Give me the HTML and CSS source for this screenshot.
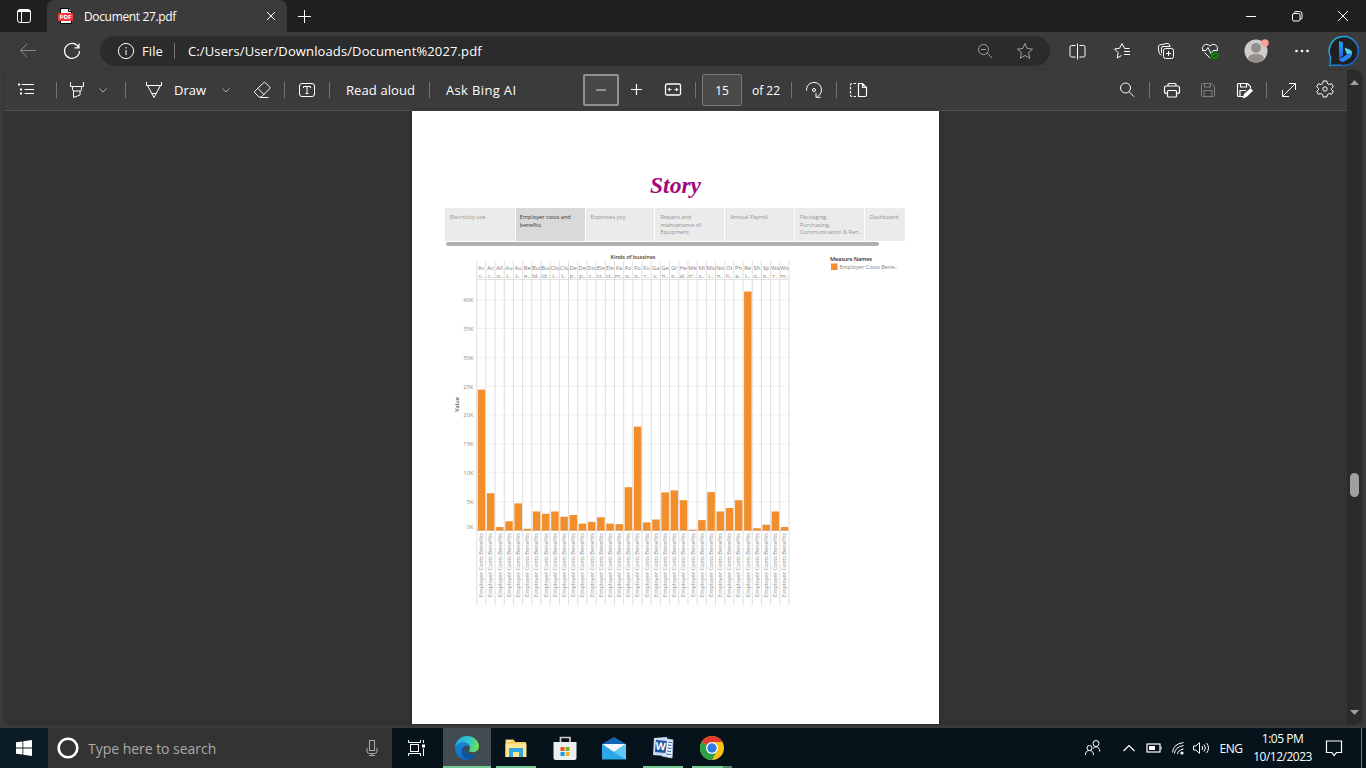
FILE: index.html
```html
<!DOCTYPE html>
<html lang="en">
<head>
<meta charset="utf-8">
<title>Document 27.pdf</title>
<link rel="stylesheet" href="styles.css">
</head>
<body>
<div class="screen">
  <header class="titlebar">
    <div class="workspace"><svg class="ic" width="16" height="16"><rect x="1.5" y="1.5" width="13" height="13" rx="2.5"/><path d="M1.5 3.5h13M2 2.5h12M5.500 4v10"/></svg></div>
    <div class="tab">
      <svg width="16" height="16"><path d="M2.500.5h8l3 3v12h-11z" fill="#fff" stroke="#000"/><path d="M10.500.5v3h3" fill="#ddd" stroke="#000"/><rect y="5" width="15" height="8" rx="1" fill="#f33b3b"/><text x="1.500" y="11.200" font-size="6" font-weight="700" textLength="12" lengthAdjust="spacingAndGlyphs" fill="#fff">PDF</text></svg>
      <span class="tab-title">Document 27.pdf</span>
      <svg class="ic tab-close" width="10" height="10"><path d="M1 1l8 8M9 1l-8 8"/></svg>
    </div>
    <div class="newtab"><svg class="ic" width="15" height="15"><path d="M7.500 1v13M1 7.500h13"/></svg></div>
    <div class="window-buttons">
      <svg class="ic" width="12" height="12"><path d="M1 6.500h10"/></svg>
      <svg class="ic" width="12" height="12"><rect x="1.500" y="3.500" width="7.500" height="7.500" rx="1.500"/><path d="M3.500 3.500V2.500q0-1 1-1h4q2.500 0 2.500 2.500v4q0 1-1 1H9"/></svg>
      <svg class="ic" width="12" height="12"><path d="M1 1l10 10M11 1L1 11"/></svg>
    </div>
  </header>

  <nav class="addressbar">
    <div class="cell dim"><svg class="ic" width="18" height="16"><path d="M17 7.500H1.500M8 1L1.500 7.500L8 14"/></svg></div>
    <div class="cell"><svg class="ic w12" width="18" height="18"><path d="M15.700 5.500A7.500 7.500 0 1 0 16.500 9M16 1.500v4.300h-4.500"/></svg></div>
    <div class="omnibox">
      <div class="cell"><svg class="ic" width="18" height="18"><circle cx="9" cy="9" r="7.600"/><path d="M9 8v5M9 5v1.500"/></svg></div>
      <span class="file">File</span>
      <i class="sep"></i>
      <span class="url">C:/Users/User/Downloads/Document%2027.pdf</span>
      <div class="cell mid"><svg class="ic" width="16" height="16"><circle cx="6.500" cy="6.500" r="5"/><path d="M4 6.500h5M10.200 10.200L15 15"/></svg></div>
      <div class="cell mid"><svg class="ic" width="18" height="18"><path d="M9 1.500l2.200 5 5.300.6-4 3.600 1.200 5.500L9 13.500l-4.700 2.700 1.200-5.500-4-3.600 5.300-.6z"/></svg></div>
    </div>
    <div class="cell"><svg class="ic" width="17" height="17"><path d="M6.500 2.500h-4q-1.500 0-1.500 1.500v8.500q0 1.500 1.500 1.500h4M10.500 2.500h4q1.500 0 1.500 1.500v8.500q0 1.500-1.500 1.500h-4M8.500 .5v16"/></svg></div>
    <div class="cell"><svg class="ic" width="18" height="18"><path d="M16.500 6.500h-4.800L9 1.500 6.500 6.300 1.500 7l3.700 3.700-1 5.300L8.500 13.500M11 9.500h6M11 12.500h6"/></svg></div>
    <div class="cell"><svg class="ic" width="18" height="18"><rect x="6.500" y="6.500" width="10" height="10" rx="2"/><path d="M11.500 9v5M9 11.500h5M4.500 13Q2.500 12.500 2 10.500L1.300 5Q1.200 3.300 3 2.800l7-1.300q2-.2 2.500 1.500l.3 1.500M4.500 11V6q0-1.500 1.500-1.500h7.500"/></svg></div>
    <div class="cell"><svg class="ic" width="18" height="18"><path d="M2.300 9C-.5 4 5 0 9 4c4-4 9.500 0 6.700 5M1 8.500h4l2-3 3 6 2-3h4.500M3.500 10.500L9 16"/><circle cx="13.500" cy="13.500" r="4" fill="#107c10" stroke="none"/><path d="M11.800 13.800l1.200 1 2-2.200" stroke="#043904"/></svg></div>
    <div class="cell"><svg width="26" height="26"><circle cx="13" cy="13" r="11.500" fill="#cfccc9"/><circle cx="13" cy="10" r="5" fill="#918e8b"/><path d="M5 21q0-5 8-5t8 5q-8 7-16 0z" fill="#918e8b"/><circle cx="22" cy="5" r="3.700" fill="#ff9e98"/></svg></div>
    <div class="cell"><svg width="16" height="16"><g fill="#fff"><circle cx="2.500" cy="8" r="1.300"/><circle cx="8" cy="8" r="1.300"/><circle cx="13.500" cy="8" r="1.300"/></g></svg></div>
    <div class="cell"><svg width="32" height="32">
      <defs><linearGradient id="ring" x1="0" y1="0" x2="1" y2="1"><stop offset="0" stop-color="#26c3e8"/><stop offset="1" stop-color="#174fcc"/></linearGradient><linearGradient id="bee" x1="0" y1="0" x2="0" y2="1"><stop offset="0" stop-color="#27a4f5"/><stop offset="1" stop-color="#1c5ee8"/></linearGradient></defs>
      <path d="M16 1.500a14.500 14.500 0 1 1-4 28.500L1.700 30.500l1-8A14.500 14.500 0 0 1 16 1.500z" fill="#202020" stroke="url(#ring)" stroke-width="1.500"/>
      <path d="M11 6l4 1.500V20l-4 4.500z" fill="url(#bee)"/><path d="M16.500 12.500l6 2.500q2.500 2 1 5.500l-5-2z" fill="#4ad5e8"/><path d="M11 24.500l8-5q3-2 5-1-.5 3.500-3 5l-6 3.500q-3-.5-4-2.500z" fill="#2987f4"/></svg></div>
  </nav>

  <main class="frame">
    <section class="viewer">
      <div class="pdfbar">
        <svg class="ic ml10" width="24" height="24"><path d="M7.500 6.500H20M10.500 11.500H20M10.500 15.500H20"/><path d="M4 6.500h2M6 11.500h2M6 15.500h2" stroke-width="2"/></svg>
        <i class="sep ml18"></i>
        <svg class="ic ml8" width="24" height="24"><path d="M5.500 4v4.500h13V4M7.500 8.500v3q0 1.500 1.500 1.500h6q1.500 0 1.500-1.500v-3M8.500 13v6.500l6.500-2.500v-4"/></svg>
        <svg class="ic ml8" width="12" height="12"><path d="M2.500 4.500L6 8l3.500-3.500" stroke="#aaa"/></svg>
        <i class="sep ml16"></i>
        <svg class="ic ml16" width="24" height="24"><path d="M4.500 4v3.500h15V4M5.500 7.500l6.500 12 6.500-12M9.500 15.500h5" /></svg>
        <span class="label draw ml8">Draw</span>
        <svg class="ic ml10" width="12" height="12"><path d="M2.500 4.500L6 8l3.500-3.500" stroke="#aaa"/></svg>
        <svg class="ic ml18" width="24" height="24"><path d="M4.800 13.200L13.500 4.800q1-1 2 0l4 4q1 1 0 2l-8 8q-1 1-2.500 0l-4.200-4q-1-.8 0-1.600zM8 10.500l6 6M10 19.500h8.500"/></svg>
        <i class="sep ml10"></i>
        <svg class="ic ml10" width="24" height="24"><rect x="4.500" y="5.500" width="15" height="13" rx="2.500"/><path d="M8.500 10V8.500h7V10M12 8.500v7M10.500 15.500h3"/></svg>
        <i class="sep ml10"></i>
        <span class="label read ml16">Read aloud</span>
        <i class="sep ml11"></i>
        <span class="label bing ml16">Ask Bing AI</span>
        <button class="minus ml63"><svg class="ic" width="12" height="12"><path d="M1 6h10" stroke="#aaa" stroke-width="1.500"/></svg></button>
        <svg class="ic ml5 w12" width="24" height="24"><path d="M7 11.500h11M12.500 6v11"/></svg>
        <svg class="ic ml13" width="24" height="24"><rect x="4.500" y="6" width="15" height="11" rx="1.500" stroke-width="1.300"/><path d="M7.500 11.500h3M13.500 11.500h3"/><path d="M6.500 11.500l2.500-2v4zM17.500 11.500L15 9.500v4z" fill="#fff" stroke="none"/></svg>
        <i class="sep ml10"></i>
        <span class="pagebox ml6">15</span>
        <span class="label total ml10">of 22</span>
        <i class="sep ml9"></i>
        <svg class="ic ml10" width="24" height="24"><path d="M4.500 12.500A7.500 7.500 0 1 1 15.500 18.500M14 14.800v4.500h4.500"/><circle cx="12" cy="12" r="1.500"/></svg>
        <i class="sep ml10"></i>
        <svg class="ic ml9 w12" width="24" height="24"><path d="M12.500 5.500h4l4 4v7.500q0 1.500-1.500 1.500h-6.500zM16.500 5.500v4h4"/><path d="M10 5.500H6q-1.500 0-1.500 1.500v10q0 1.500 1.500 1.500h4" stroke-dasharray="2.500 1.500"/></svg>
        <svg class="ic push" width="24" height="24"><circle cx="10.500" cy="10" r="5"/><path d="M14 13.700L19 18.700"/></svg>
        <i class="sep ml10"></i>
        <svg class="ic ml10 w12" width="24" height="24"><path d="M8 8V6.500q0-1 1-1h6q1 0 1 1V8M7.500 15.500h-1q-2 0-2-2V10q0-2 2-2h11q2 0 2 2v3.500q0 2-2 2h-1"/><rect x="7.500" y="12.500" width="9" height="6.500" rx="1"/></svg>
        <svg class="ic ml12 faint" width="24" height="24"><path d="M6.500 5.500h9l3 3v9q0 1-1 1h-11q-1 0-1-1v-11q0-1 1-1zM8.500 5.500v3.500h6V5.500M8 18.500v-6h8v6"/></svg>
        <svg class="ic ml12 w12" width="24" height="24"><path d="M11 18.500H6.500q-1 0-1-1v-11q0-1 1-1h9l3 3v2M8.500 5.500v3.500h6V5.500M8 18.500v-6h6"/><path d="M11.500 19.500l1-3.200 6-5.300 1.700 1.800-6 5.700z" fill="#fff"/></svg>
        <i class="sep ml10"></i>
        <svg class="ic ml10" width="24" height="24"><path d="M5.500 18.500L18.500 5.500M12 5.500h6.500V12M5.500 12v6.500H12"/></svg>
        <svg class="ic ml12" width="24" height="24"><path d="M10.200 3h3.600l.6 2.500 1.700 1 2.500-.8 1.700 3-1.900 1.800v1l1.900 1.800-1.700 3-2.500-.8-1.700 1-.6 2.500h-3.600l-.6-2.500-1.700-1-2.500.8-1.700-3 1.900-1.800v-1L3.700 8.700l1.700-3 2.500.8 1.700-1z"/><circle cx="12" cy="11" r="2.200"/></svg>
      </div>
      <div class="canvas">
        <article class="page">
          <h1>Story</h1>
          <div class="story-points">
            <div>Elecrticity use</div>
            <div class="active">Employer costs and<br>benefits</div>
            <div>Expenses yoy</div>
            <div>Repairs and<br>maintanance of<br>Equipment</div>
            <div>Annual Payroll</div>
            <div>Packaging,<br>Purchasing,<br>Communication &amp; Ren..</div>
            <div>Dashboard</div>
          </div>
          <div class="story-scroll"></div>
          <svg id="chart" class="chart" width="527" height="360" viewBox="412 250 527 360"></svg>
        </article>
      </div>
    </section>
    <aside class="scrollbar">
      <svg width="9" height="5"><path d="M0 5L4.500 0 9 5z" fill="#a0a0a0"/></svg>
      <div class="thumb"></div>
      <svg width="9" height="5"><path d="M0 0L4.500 5 9 0z" fill="#a0a0a0"/></svg>
    </aside>
  </main>

  <footer class="taskbar">
    <div class="start"><svg width="16" height="16" fill="#fff"><path d="M0 2.300L6.500 1.400V7.600H0zM7.300 1.200L16 0v7.600H7.300zM0 8.400h6.500v6.200L0 13.700zM7.300 8.400H16V16l-8.700-1.200z"/></svg></div>
    <div class="search">
      <svg width="22" height="22"><circle cx="11" cy="11" r="9.300" fill="none" stroke="#fff" stroke-width="2.600"/></svg>
      <span>Type here to search</span>
      <svg width="12" height="18" fill="none" stroke="#aaa"><rect x="3.500" y="1.500" width="5" height="10"/><path d="M1 9v3q0 2.500 2.500 2.500h5Q11 14.500 11 12V9M6 14.500v2M3 16.500h6"/></svg>
    </div>
    <div class="app view"><svg class="ic" width="18" height="18"><rect x="3.500" y="5.500" width="8" height="7"/><path d="M1.500 1v2.500h12V1M1.500 17v-2.500h12V17M16.500 1v3M16.500 9.500V17"/><path d="M15 5.500h3v3h-3z" fill="#fff" stroke="none"/></svg></div>
    <div class="app on current"><svg width="24" height="24" viewBox="0 0 24 24">
      <defs>
        <linearGradient id="sea" x1="0" y1=".3" x2="1" y2=".5"><stop offset="0" stop-color="#2aa5e2"/><stop offset=".55" stop-color="#2fc6cf"/><stop offset="1" stop-color="#6fe04f"/></linearGradient>
        <linearGradient id="deep" x1="0" y1="0" x2="0" y2="1"><stop offset="0" stop-color="#1687d8"/><stop offset="1" stop-color="#1068bd"/></linearGradient>
      </defs>
      <path d="M0 11.500C.5 4.500 6 0 12 0c7 0 12 5 12 10.300 0 3.700-2.800 5.900-6 5.900-2.600 0-4-.8-4-1.700 0-.6 1-1 1-2.600C15 9 12 6.500 8.500 6.500 4 6.500.5 9.500 0 11.500z" fill="url(#sea)"/>
      <path d="M0 11.500C1 8 4.500 6.500 8 6.500c4 0 7 2.500 7 5.400C14.500 10.500 13 9.600 11.500 9.600 9 9.600 7 12 7 15c0 5 4.500 8 7 8.700-1 .3-1.500.3-2 .3C5 24 0 18.500 0 12z" fill="url(#deep)"/>
      <path d="M11.500 9.600C8.500 10.800 7 13 7 15.500c0 5 4 8.200 7 8.200 3.500-.5 6.500-2.700 8-5.200.3-.6-.1-.8-.6-.6C14.500 20.800 9 16.500 9.500 12.500c.2-1.300 1-2.400 2-2.900z" fill="#0e559f"/>
    </svg></div>
    <div class="app on"><svg width="24" height="24"><path d="M1.500 3.500h8l2 2.500H22v15H1.500z" fill="#f5cb57"/><path d="M1.500 7.500H22.500V21h-21z" fill="#ffe594"/><path d="M2.500 4.500h5v1h-5z" fill="#fff"/><path d="M5 21v-8q0-1 1-1h12q1 0 1 1v8h-4v-5H9v5z" fill="#35a7e0"/></svg></div>
    <div class="app"><svg width="24" height="26"><path d="M7.500 8V2.500h9.500V8" fill="none" stroke="#ccc" stroke-width="1.700"/><path d="M.5 7h23v16q0 2-2 2h-19q-2 0-2-2z" fill="#eee"/><path d="M7.500 12H11.500v4h-4z" fill="#ef5122"/><path d="M12.500 12h4v4h-4z" fill="#78b51e"/><path d="M7.500 17h4v4h-4z" fill="#10a1e6"/><path d="M12.500 17h4v4h-4z" fill="#f6b71d"/></svg></div>
    <div class="app"><svg width="26" height="26"><path d="M1 9L13 2l12 7v15H1z" fill="#1364b4"/><path d="M1 9h24L13 18z" fill="#f4f6f8"/><path d="M1 9l12 8 12-8v15.500H1z" fill="#2ca8e8"/><path d="M25 9v15.500L13 17z" fill="#5ccbf3"/></svg></div>
    <div class="app on"><svg width="26" height="26"><path d="M12 3l11 2-1 18-10-2z" fill="#eef3fb" stroke="#a5bddf"/><path d="M18 7l4 .6M18 10l3.500.5M17.500 13l4 .5M17 16l4 .5M16 19l5 .6" stroke="#315da5"/><path d="M4 3l13-1-2 19-12-1z" fill="#c9daf2"/><path d="M6 5l11 1-1.500 12L5 17z" fill="#24549e"/><text x="5.500" y="15" font-size="10.500" font-weight="700" fill="#fff" transform="rotate(5 12 12)">W</text></svg></div>
    <div class="app on chrome"><svg width="26" height="26"><circle cx="13" cy="13" r="12" fill="#fbc116"/><path d="M13 13L2.600 7A12 12 0 0 1 23.400 7z" fill="#e33b2e"/><path d="M13 13L2.600 7A12 12 0 0 0 13 25l5-9z" fill="#2da14c"/><path d="M13 7h10.400L18 16z" fill="#fbc116"/><circle cx="13" cy="13" r="6" fill="#fff"/><circle cx="13" cy="13" r="4.700" fill="#3478e5"/></svg></div>
    <div class="tray">
      <svg class="ic" width="18" height="18"><circle cx="12" cy="4.500" r="3"/><circle cx="5.500" cy="9" r="2.500"/><path d="M1.500 16q0-4.500 4-4.500t4 4.500M9 9.500Q12 6 15 9.500q.7 1 .7 3"/></svg>
      <svg class="ic w12" width="14" height="14"><path d="M1.500 10L7 4.500l5.500 5.500"/></svg>
      <svg class="ic" width="16" height="12"><rect x="1" y="2" width="13" height="8" stroke-width="1.200"/><path d="M15 4.500v3"/><path d="M3 4h6v4H3z" fill="#fff" stroke="none"/></svg>
      <svg class="ic" width="14" height="14" ><path d="M3.500 12.500Q4 6 12.500 4.500M6.500 13Q7 9 12.500 8M1.500 11.500Q2 3 12.500 1.500" /><circle cx="11" cy="12" r="1.600" fill="#fff" stroke="none"/></svg>
      <svg class="ic" width="18" height="14"><path d="M1.500 5H4l3.500-3.500v11L4 9H1.500zM10 5q1.500 2 0 4M12 3.500q3 3.500 0 7M14.500 2q4 5 0 10"/></svg>
      <span class="lang">ENG</span>
      <div class="clock"><span>1:05 PM</span><span>10/12/2023</span></div>
      <svg class="ic w12" width="18" height="18"><path d="M1.500 2h15v11.500h-5L9 16.500 7 13.500H1.500z"/></svg>
      <i class="desktop-edge"></i>
    </div>
  </footer>
</div>
<script src="chart.js"></script>
</body>
</html>
```
FILE: styles.css
```css
* { box-sizing: border-box; }
body { margin: 0; font-family: "Open Sans", "Noto Sans", sans-serif; color: #fff; background: #3b3b3b; overflow: hidden; }
.screen { width: 1366px; height: 768px; display: flex; flex-direction: column; background: #3b3b3b; }
svg { display: block; flex: none; }
.ic { fill: none; stroke: #fff; stroke-width: 1; }
.w12 { stroke-width: 1.2; }
.cell { display: flex; align-items: center; justify-content: center; }
.sep { flex: none; width: 1px; height: 16px; background: #737373; }

.titlebar { height: 32px; flex: none; display: grid; grid-template-columns: 47px 240px 35px 1fr 138px; background: #202020; }
.workspace, .newtab { display: flex; align-items: center; justify-content: center; }
.tab { display: flex; align-items: center; padding: 0 11px 0 11px; background: #3b3b3b; border-radius: 8px 8px 0 0; }
.tab-title { margin-left: 10px; flex: 1; font-size: 12px; letter-spacing: -0.35px; white-space: nowrap; }
.window-buttons { grid-column: 5; display: grid; grid-template-columns: repeat(3, 46px); place-items: center; }

.addressbar { height: 38px; flex: none; display: grid; grid-template-columns: 56px 32px 12px 950px 5px 44px 45px 44px 44px 48px 44px 40px; align-items: center; }
.addressbar > :nth-child(3) { grid-column: 4; }
.addressbar > :nth-child(4) { grid-column: 6; }
.omnibox { height: 30px; border-radius: 15px; background: #2b2b2b; display: grid; grid-template-columns: 16px 20px 6px 26px 13px 7px 1fr 40px 40px 5px; align-items: center; font-size: 13px; white-space: nowrap; }
.omnibox > :nth-child(1) { grid-column: 2; }
.omnibox .file { grid-column: 4; letter-spacing: 0.1px; }
.omnibox .sep { justify-self: center; }
.omnibox .url { grid-column: 7; letter-spacing: 0.12px; }
.dim { opacity: .4; }
.mid { opacity: .55; }
.faint { opacity: .35; }

.frame { height: 655px; margin: 0 4px 3px; flex: none; display: flex; border-radius: 8px; overflow: hidden; background: #333; box-shadow: 0 0 2px #2b2b2b; }
.viewer { flex: 1; display: flex; flex-direction: column; }
.pdfbar { height: 41px; flex: none; display: flex; align-items: center; padding-right: 10px; background: #3b3b3b; border-bottom: 1px solid #505050; }
.label { font-size: 13px; white-space: nowrap; }
.draw { width: 36px; }
.read { width: 72px; letter-spacing: 0.1px; }
.bing { width: 74px; letter-spacing: 0.35px; }
.total { width: 30px; font-size: 12px; }
.minus { width: 36px; height: 32px; padding: 0; display: flex; align-items: center; justify-content: center; background: #484848; border: 2px solid #909090; border-radius: 2px; }
.pagebox { width: 40px; height: 32px; display: flex; align-items: center; justify-content: center; background: #4a4a4a; border: 1px solid #777; border-radius: 2px; font-size: 12px; }
.ml5 { margin-left: 5px; }
.ml6 { margin-left: 6px; }
.ml8 { margin-left: 8px; }
.ml9 { margin-left: 9px; }
.ml10 { margin-left: 10px; }
.ml11 { margin-left: 11px; }
.ml12 { margin-left: 12px; }
.ml13 { margin-left: 13px; }
.ml16 { margin-left: 16px; }
.ml18 { margin-left: 18px; }
.ml63 { margin-left: 63px; }
.push { margin-left: auto; }

.canvas { flex: 1; padding: 0 0 1px 408px; background: #333; }
.page { width: 527px; height: 613px; background: #fff; box-shadow: 0 0 3px #222; }
.page h1 { margin: 0; padding-top: 60px; height: 97px; text-align: center; font: italic 700 23.5px/28px "Liberation Serif", serif; color: #a0087c; }
.story-points { margin-left: 33px; width: 460px; height: 33px; display: grid; grid-template-columns: 69.8px repeat(5, 68.8px) 1fr; column-gap: 1px; }
.story-points div { padding: 6px 0 0 5px; background: #ebebeb; color: #929292; font-size: 5.6px; line-height: 7.6px; white-space: nowrap; }
.story-points .active { padding-left: 4px; background: #d9d9d9; color: #333; }
.story-scroll { width: 433px; height: 4px; margin: 1px 0 4px 34px; border-radius: 2px; background: #b0b0b0; }
.chart text { font-family: "Open Sans", sans-serif; }

.scrollbar { width: 15px; display: flex; flex-direction: column; align-items: center; padding: 10px 0; background: #2b2b2b; }
.thumb { width: 9px; height: 24px; margin: 388px 0 auto; border-radius: 5px; background: #a0a0a0; }

.taskbar { height: 40px; flex: none; display: flex; background: #07131a; }
.start { width: 48px; display: flex; align-items: center; justify-content: center; background: #0a1b23; }
.search { width: 344px; display: flex; align-items: center; padding: 0 14px 0 9px; background: #333; color: #aaa; font-size: 14px; }
.search span { flex: 1; margin-left: 9px; letter-spacing: -0.03px; }
.app { width: 48px; margin-right: 1px; display: flex; align-items: center; justify-content: center; }
.view { margin-right: 3px; }
.app.on { background: linear-gradient(#76c893, #76c893) 50% 100% / 40px 2px no-repeat; }
.app.current { background: linear-gradient(#76c893, #76c893) 50% 100% / 48px 2px no-repeat, #414b50; }
.app.chrome { background: linear-gradient(90deg, #76c893 31px, #4c8767 31px) 50% 100% / 40px 2px no-repeat; }
.tray { margin-left: auto; display: grid; grid-template-columns: 36px 36px 14px 34px 12px 48px 55px 47px 9px; align-items: center; justify-items: center; }
.lang { font-size: 12px; letter-spacing: -0.4px; }
.clock { display: flex; flex-direction: column; align-items: center; font-size: 12px; line-height: 18px; letter-spacing: -0.5px; white-space: nowrap; }
.desktop-edge { width: 1px; height: 40px; background: #777; }
```
FILE: chart.js
```js
const NS = 'http://www.w3.org/2000/svg';
const chart = document.getElementById('chart');
const left = 476.7, right = 789, base = 530.5, unit = 5.772;

// [first label line, second label line, value in thousands]
const rows = [
  ['Ac','c..',24.4],['Ac','c..',6.45],['All','o..',.6],['Au','t..',1.6],['Au','t..',4.7],['Be','e..',.3],
  ['Bui','ld..',3.3],['Bui','ld..',2.9],['Clo','t..',3.3],['Clo','t..',2.4],['De','p..',2.7],['De','p..',1.2],
  ['Dis','c..',1.5],['Ele','ct..',2.3],['Ele','ct..',1.2],['Fa','m..',1.1],['Fo','o..',7.5],['Fo','o..',18],
  ['Fu','r..',1.4],['Ga','s..',1.9],['Ge','n..',6.6],['Gr','o..',6.95],['He','al..',5.25],['Me',"n'..",.15],
  ['Mi','s..',1.8],['Mo','t..',6.65],['No','n..',3.3],['Ot','h..',3.9],['Ph','a..',5.25],['Re','t..',41.4],
  ['Sh','o..',.4],['Sp','o..',1],['Wa','r..',3.3],['Wo','m..',.6]
];
const step = (right - left) / rows.length;

function add(tag, attrs, text) {
  const el = document.createElementNS(NS, tag);
  for (const k in attrs) el.setAttribute(k, attrs[k]);
  if (text) el.textContent = text;
  chart.appendChild(el);
}
function line(x1, y1, x2, y2, stroke) {
  add('line', { x1, y1, x2, y2, stroke, 'stroke-width': 1 });
}

for (let k = 0; k <= 40; k += 5) {
  const y = base - k * unit;
  line(left, y, right, y, k ? '#f3f3f3' : '#d0d0d0');
  add('text', { x: 473.5, y: y + (k ? 2.3 : -1.5), 'font-size': 5.8, fill: '#8c8c8c', 'text-anchor': 'end' }, k + 'K');
}
line(left, 279.5, right, 279.5, '#e2e2e2');
for (let i = 0; i <= rows.length; i++) {
  const x = left + i * step;
  line(x, 261, x, 605, '#dedede');
}
rows.forEach(([a, b, value], i) => {
  const x = left + i * step;
  const mid = x + step / 2;
  add('text', { x: mid, y: 270, 'font-size': 5.8, fill: '#808080', 'text-anchor': 'middle' }, a);
  add('text', { x: mid, y: 277.8, 'font-size': 5.8, fill: '#808080', 'text-anchor': 'middle' }, b);
  add('rect', { x: x + 1, y: base - value * unit, width: 7.5, height: value * unit, fill: '#f28e2b' });
  add('text', { transform: `translate(${mid + 2} 597) rotate(-90)`, 'font-size': 5.8, fill: '#8c8c8c', textLength: 64 }, 'Employer Costs Benefits');
});
add('text', { x: 633, y: 259, 'font-size': 5.6, 'font-weight': 600, fill: '#444', 'text-anchor': 'middle', textLength: 45 }, 'Kinds of bussines');
add('text', { transform: 'translate(459 412) rotate(-90)', 'font-size': 5.6, 'font-weight': 600, fill: '#555' }, 'Value');
add('text', { x: 830, y: 260.5, 'font-size': 5.7, 'font-weight': 600, fill: '#333', textLength: 42 }, 'Measure Names');
add('rect', { x: 831, y: 263.5, width: 6.5, height: 6.5, fill: '#f28e2b' });
add('text', { x: 839.5, y: 269, 'font-size': 5.7, fill: '#808080', textLength: 58 }, 'Employer Costs Bene..');
```
